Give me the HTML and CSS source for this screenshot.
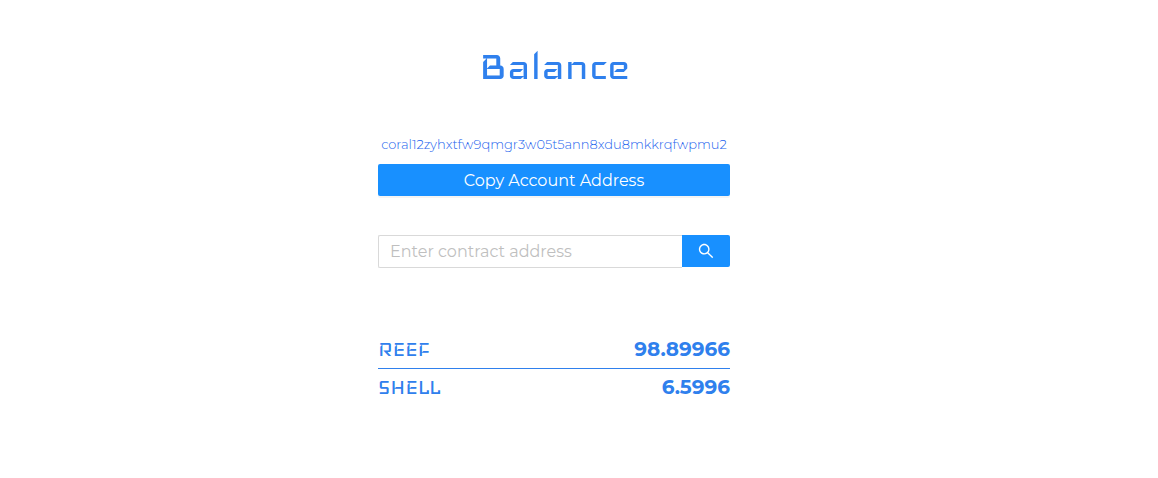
FILE: index.html
```
<!DOCTYPE html>
<html lang="en">
<head>
<meta charset="utf-8">
<title>Balance</title>
<link rel="stylesheet" href="styles.css">
</head>
<body>
<main class="wallet">
  <h1 class="title">Balance</h1>
  <div class="address"><span>coral12zyhxtfw9qmgr3w05t5ann8xdu8mkkrqfwpmu2</span></div>
  <button class="copy"><span>Copy Account Address</span></button>
  <div class="search">
    <div class="field"><span>Enter contract address</span></div>
    <button class="search-button" aria-label="Search">
      <svg width="16" height="16" viewBox="64 64 896 896" fill="currentColor"><path d="M909.600 854.500L649.900 594.800C690.200 542.700 712 479 712 412c0-80.200-31.300-155.400-87.900-212.100-56.600-56.700-132-87.900-212.100-87.900s-155.500 31.300-212.100 87.900C143.200 256.500 112 331.800 112 412c0 80.100 31.300 155.500 87.900 212.100C256.500 680.800 331.800 712 412 712c67 0 130.600-21.800 182.700-62l259.700 259.600a8.200 8.200 0 0 0 11.600 0l43.600-43.500a8.200 8.200 0 0 0 0-11.600zM570.400 570.400C528 612.700 471.800 636 412 636s-116-23.300-158.400-65.600C211.300 528 188 471.800 188 412s23.300-116.100 65.600-158.400C296 211.300 352.200 188 412 188s116.100 23.200 158.400 65.600S636 352.200 636 412s-23.300 116.100-65.600 158.400z"/></svg>
    </button>
  </div>
  <div class="balances">
    <div class="row"><span class="token">REEF</span><span class="amount">98.89966</span></div>
    <div class="row"><span class="token">SHELL</span><span class="amount">6.5996</span></div>
  </div>
</main>
</body>
</html>
```
FILE: styles.css
```
* { box-sizing: border-box; }
body { margin: 0; background: #fff; overflow: hidden; font-family: Montserrat, Inter, sans-serif; color: #2f80ed; }
.wallet { width: 352px; margin: 0 0 0 378px; padding-top: 42px; display: flex; flex-direction: column; }
.title { margin: 0; height: 48px; line-height: 48px; display: flex; justify-content: center; white-space: nowrap; font-family: Iceland, Iceberg, sans-serif; font-weight: 400; font-size: 48.8px; }
.address { margin-top: 44px; height: 22px; line-height: 21px; display: flex; justify-content: center; white-space: nowrap; font-size: 13px; font-weight: 300; color: #2464ee; }
.copy { margin-top: 8px; height: 32px; padding: 1px 0 0; border: 0; border-radius: 2px; background: #1890ff; color: #fff; font: 400 16px/31px Montserrat, Inter, sans-serif; box-shadow: 0 2px 0 rgba(0,0,0,.045); }
.search { margin-top: 39px; height: 33px; display: flex; align-items: flex-start; }
.field { flex: 1; height: 33px; padding-left: 11px; border: 1px solid #d9d9d9; border-right: 0; border-radius: 2px 0 0 2px; font-size: 16px; line-height: 31px; color: #bfbfbf; white-space: nowrap; }
.search-button { width: 48px; height: 32px; padding: 0; border: 0; border-radius: 0 2px 2px 0; background: #1890ff; color: #fff; display: grid; place-items: center; }
.balances { margin-top: 62px; }
.row { height: 38px; display: flex; justify-content: space-between; align-items: center; white-space: nowrap; }
.row:first-child { height: 39px; border-bottom: 1px solid #2f80ed; }
.row:last-child { height: 36px; }
.token { padding-top: 2px; font: 400 25px/34px Iceland, Iceberg, sans-serif; }
.amount { font-size: 20px; font-weight: 700; line-height: 36px; }
```
